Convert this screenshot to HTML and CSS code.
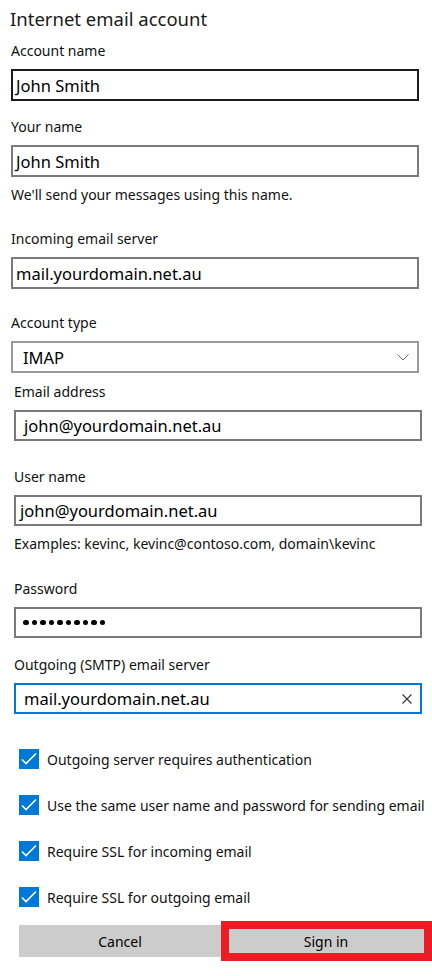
FILE: index.html
```html
<!DOCTYPE html>
<html lang="en">
<head>
<meta charset="utf-8">
<title>Internet email account</title>
<link rel="stylesheet" href="styles.css">
</head>
<body>
<div class="page">
  <h1 class="title">Internet email account</h1>

  <div class="section sec1">
    <div class="field f-account">
      <div class="label">Account name</div>
      <div class="box box-dark pad-3">John Smith</div>
    </div>
    <div class="field f-yourname">
      <div class="label">Your name</div>
      <div class="box pad-3">John Smith</div>
    </div>
    <div class="hint hint-name">We'll send your messages using this name.</div>
    <div class="field f-incoming">
      <div class="label">Incoming email server</div>
      <div class="box pad-3">mail.yourdomain.net.au</div>
    </div>
    <div class="field f-type">
      <div class="label">Account type</div>
      <div class="box box-select pad-10">
        <span class="grow">IMAP</span>
        <svg class="chevron" width="12" height="7" viewBox="0 0 12 7"><path d="M0.5 0.5 L6 6 L11.5 0.5" fill="none" stroke="#6a6a6a" stroke-width="1"/></svg>
      </div>
    </div>
  </div>

  <div class="section sec2">
    <div class="field f-email">
      <div class="label">Email address</div>
      <div class="box box-31 pad-9">john@yourdomain.net.au</div>
    </div>
    <div class="field f-user">
      <div class="label">User name</div>
      <div class="box box-31 pad-4">john@yourdomain.net.au</div>
    </div>
    <div class="hint hint-examples">Examples: kevinc, kevinc@contoso.com, domain\kevinc</div>
    <div class="field f-password">
      <div class="label">Password</div>
      <div class="box box-31 pad-7">
        <span class="dots"><i></i><i></i><i></i><i></i><i></i><i></i><i></i><i></i><i></i><i></i></span>
      </div>
    </div>
    <div class="field f-outgoing">
      <div class="label">Outgoing (SMTP) email server</div>
      <div class="box box-31 box-focus pad-8">
        <span class="grow">mail.yourdomain.net.au</span>
        <svg class="clear" width="10" height="10" viewBox="0 0 10 10"><path d="M0.5 0.5 L9.5 9.5 M9.5 0.5 L0.5 9.5" fill="none" stroke="#333" stroke-width="1.1"/></svg>
      </div>
    </div>
  </div>

  <div class="checks">
    <div class="check"><span class="cb"><svg width="20" height="20" viewBox="0 0 20 20"><path d="M3 10.5 L7 14.5 L17 4.5" fill="none" stroke="#fff" stroke-width="1.6"/></svg></span><span>Outgoing server requires authentication</span></div>
    <div class="check"><span class="cb"><svg width="20" height="20" viewBox="0 0 20 20"><path d="M3 10.5 L7 14.5 L17 4.5" fill="none" stroke="#fff" stroke-width="1.6"/></svg></span><span>Use the same user name and password for sending email</span></div>
    <div class="check"><span class="cb"><svg width="20" height="20" viewBox="0 0 20 20"><path d="M3 10.5 L7 14.5 L17 4.5" fill="none" stroke="#fff" stroke-width="1.6"/></svg></span><span>Require SSL for incoming email</span></div>
    <div class="check"><span class="cb"><svg width="20" height="20" viewBox="0 0 20 20"><path d="M3 10.5 L7 14.5 L17 4.5" fill="none" stroke="#fff" stroke-width="1.6"/></svg></span><span>Require SSL for outgoing email</span></div>
  </div>

  <div class="buttons">
    <div class="btn">Cancel</div>
    <div class="btn">Sign in</div>
    <div class="highlight"></div>
  </div>
</div>
</body>
</html>
```

FILE: styles.css
```css
html, body {
  margin: 0;
  padding: 0;
  background: #ffffff;
}
body {
  font-family: "Noto Sans", "Open Sans", sans-serif;
  color: #000000;
  width: 432px;
  height: 976px;
  overflow: hidden;
}
.page {
  padding-top: 4px;
}
.title {
  margin: 0 0 0 10px;
  font-size: 18.5px;
  font-weight: 400;
  line-height: 29px;
  color: #1a1a1a;
}
.section {
  width: 408px;
}
.sec1 { margin-left: 11px; }
.sec2 { margin-left: 14px; }

.label {
  font-size: 14px;
  line-height: 20px;
  margin-bottom: 8px;
  color: #111;
}
.hint {
  font-size: 14px;
  line-height: 20px;
  color: #111;
}
.f-account { margin-top: 8px; }
.f-yourname { margin-top: 16px; }
.hint-name { margin-top: 8px; }
.f-incoming { margin-top: 24px; }
.f-type { margin-top: 24px; }
.f-email { margin-top: 9px; }
.f-user { margin-top: 26px; }
.hint-examples { margin-top: 8px; }
.f-password { margin-top: 25px; }
.f-outgoing { margin-top: 17px; }

.box {
  box-sizing: border-box;
  height: 32px;
  border: 2px solid #7a7a7a;
  display: flex;
  align-items: center;
  font-size: 16.5px;
  color: #000;
  white-space: nowrap;
}
.box-31 { height: 31px; }
.box-dark { border-color: #1b1b1b; }
.box-select { border-color: #9a9a9a; }
.box-focus { border-color: #0078d7; }
.pad-3 { padding-left: 3px; }
.pad-4 { padding-left: 4px; }
.pad-7 { padding-left: 7px; }
.pad-8 { padding-left: 8px; }
.pad-9 { padding-left: 8px; }
.pad-10 { padding-left: 10px; }
.grow { flex: 1; }
.chevron { margin-right: 8px; }
.clear { margin-right: 8px; }

.dots {
  display: flex;
  gap: 3px;
}
.dots i {
  display: block;
  width: 5.5px;
  height: 5.5px;
  border-radius: 50%;
  background: #000;
}

.checks {
  margin: 35px 0 0 19px;
  display: flex;
  flex-direction: column;
  gap: 26px;
}
.check {
  display: flex;
  align-items: center;
  gap: 8px;
  height: 20px;
  font-size: 14px;
  white-space: nowrap;
  color: #111;
}
.cb {
  width: 20px;
  height: 20px;
  background: #0078d7;
  display: block;
  flex: none;
}
.cb svg { display: block; }

.buttons {
  position: relative;
  margin: 18px 0 0 19px;
  width: 408px;
  display: grid;
  grid-template-columns: 202px 202px;
  column-gap: 4px;
}
.btn {
  height: 32px;
  background: #cccccc;
  display: flex;
  align-items: center;
  justify-content: center;
  font-size: 14px;
  color: #000;
}
.highlight {
  position: absolute;
  left: 202px;
  top: -4px;
  width: 211px;
  height: 40px;
  box-sizing: border-box;
  border: 8px solid #ed1c24;
}
```
